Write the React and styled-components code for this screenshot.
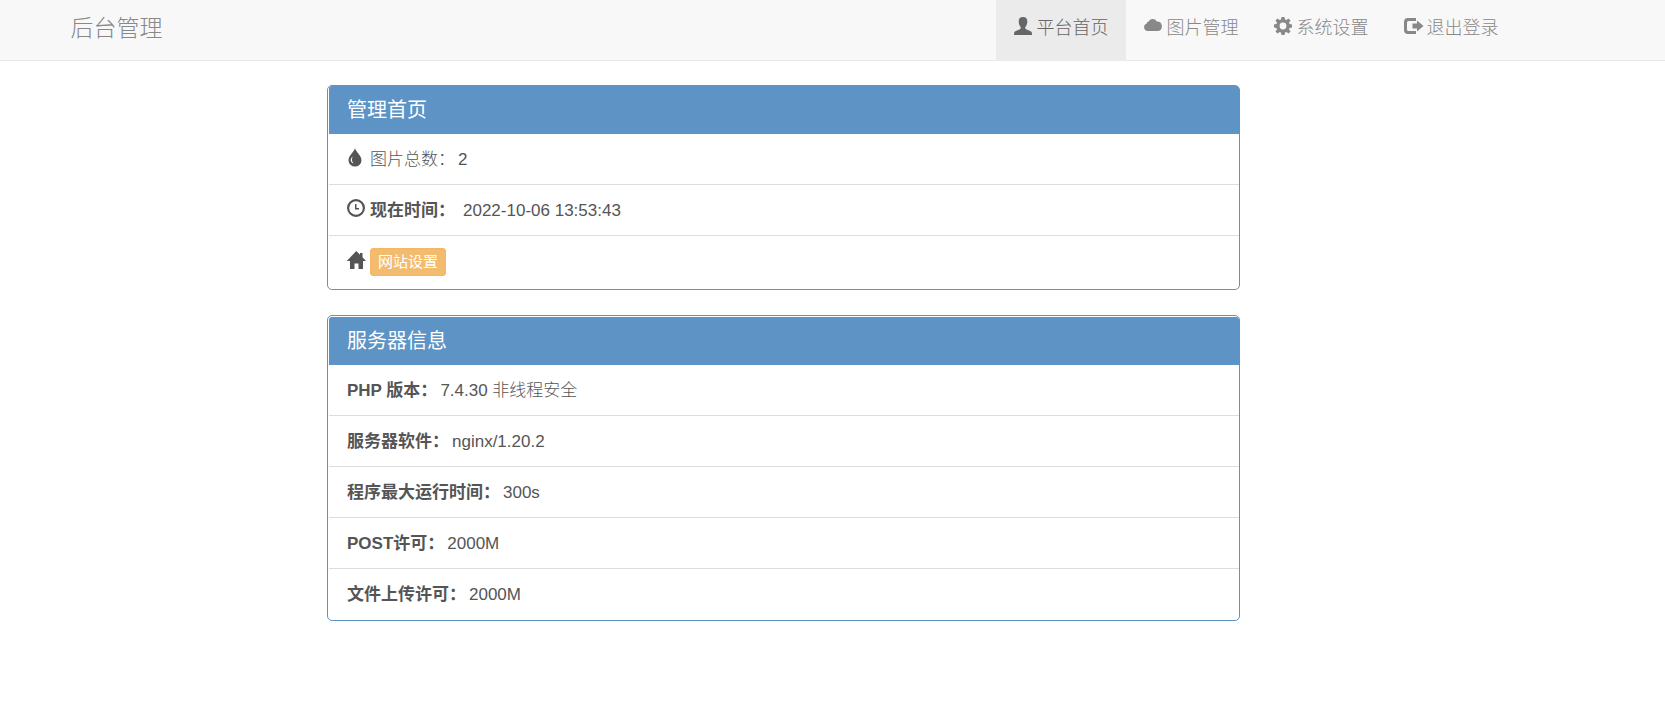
import React from 'react';
import styled, { createGlobalStyle } from 'styled-components';

const icons = {
  user: (
    <path d="M9 0C6.200 0 4.700 1.500 4.700 4.300c0 1.900.5 3.700 1.400 4.900.5.7.7 1.100.7 1.600 0 .9-.5 1.300-1.500 1.700L1.800 14C.6 14.600 0 15.400 0 17v1h18v-1c0-1.600-.6-2.400-1.800-3l-3.500-1.500c-1-.4-1.500-.8-1.500-1.700 0-.5.2-.9.7-1.600.9-1.200 1.400-3 1.400-4.900C13.300 1.500 11.800 0 9 0z" />
  ),
  cloud: (
    <path d="M3.600 14A3.700 3.700 0 0 1 2.600 6.800 2.500 2.500 0 0 1 4.600 4.500 4.700 4.700 0 0 1 12.800 4.500 4.800 4.800 0 0 1 14 14z" />
  ),
  cog: (
    <path
      fillRule="evenodd"
      d="M7.500 0h3l.5 2.500 1.300.6 2.200-1.500 2 2-1.500 2.200.6 1.300 2.400.5v2.800l-2.400.5-.6 1.300 1.500 2.200-2 2-2.200-1.500-1.300.6-.5 2.500h-3L7 15.500l-1.300-.6-2.200 1.500-2-2L3 12.200l-.6-1.300L0 10.400V7.600l2.400-.5L3 5.800 1.500 3.600l2-2 2.200 1.500L7 2.500zM9 5.600a3.400 3.400 0 1 0 0 6.800 3.400 3.400 0 0 0 0-6.800z"
    />
  ),
  logout: (
    <g>
      <path d="M12 1H4a4 4 0 0 0-4 4v8a4 4 0 0 0 4 4h8v-3H4.500a1.500 1.500 0 0 1-1.500-1.500v-7A1.500 1.500 0 0 1 4.500 4H12z" />
      <path d="M13 3.500L19.500 9 13 14.500V11.500H8.500v-5H13z" />
    </g>
  ),
  tint: (
    <path
      fillRule="evenodd"
      d="M8 0C7.400 3.800 1.500 7.300 1.500 12.200a6.500 6.300 0 0 0 13 0C14.500 7.300 8.600 3.800 8 0zM5.700 8.600c-1.100 2.500-1.100 5 .8 6.900C3.300 14.800 2.700 11 5.700 8.600z"
    />
  ),
  time: (
    <path
      fillRule="evenodd"
      d="M9 0a9 9 0 1 0 0 18A9 9 0 0 0 9 0zm0 2.200a6.800 6.800 0 1 1 0 13.600A6.800 6.800 0 0 1 9 2.200zM8 5h1.500v4H12v1.500H8z"
    />
  ),
  home: (
    <path d="M9.300 0L-.3 10H3v8h4.500v-5.500h4V18H16v-8h3L15.500 6.200V2H13v1.700z" />
  ),
};

const Icon = ({ name }) => (
  <IconSvg viewBox="0 0 18 18" aria-hidden="true">
    {icons[name]}
  </IconSvg>
);

const navItems = [
  { icon: 'user', text: '平台首页', active: true },
  { icon: 'cloud', text: '图片管理' },
  { icon: 'cog', text: '系统设置' },
  { icon: 'logout', text: '退出登录' },
];

const serverInfo = [
  { name: 'PHP 版本：', value: '7.4.30 非线程安全' },
  { name: '服务器软件：', value: 'nginx/1.20.2' },
  { name: '程序最大运行时间：', value: '300s' },
  { name: 'POST许可：', value: '2000M' },
  { name: '文件上传许可：', value: '2000M' },
];

const App = () => (
  <>
    <GlobalStyle />
    <Navbar>
      <NavContainer>
        <Brand href="#">后台管理</Brand>
        <NavList>
          {navItems.map(item => (
            <li key={item.text}>
              <NavLink href="#" $active={item.active}>
                <Icon name={item.icon} />
                {item.text}
              </NavLink>
            </li>
          ))}
        </NavList>
      </NavContainer>
    </Navbar>
    <Main>
      <Panel>
        <PanelTitle $flush>管理首页</PanelTitle>
        <List>
          <Row>
            <Icon name="tint" />
            <span>图片总数：</span>
            <Value>2</Value>
          </Row>
          <Row>
            <Icon name="time" />
            <b>现在时间：</b>
            <Clock>2022-10-06 13:53:43</Clock>
          </Row>
          <Row>
            <Icon name="home" />
            <SettingsButton type="button">网站设置</SettingsButton>
          </Row>
        </List>
      </Panel>
      <Panel>
        <PanelTitle>服务器信息</PanelTitle>
        <List>
          {serverInfo.map(info => (
            <Row key={info.name}>
              <b>{info.name}</b>
              <Value>{info.value}</Value>
            </Row>
          ))}
        </List>
      </Panel>
    </Main>
  </>
);

const GlobalStyle = createGlobalStyle`
  * {
    box-sizing: border-box;
  }
  body {
    margin: 0;
    background-color: #fff;
    color: #555;
    font-family: "Liberation Sans", "Noto Sans CJK SC", sans-serif;
    font-size: 17px;
    line-height: 25px;
  }
`;

const IconSvg = styled.svg`
  width: 18px;
  height: 18px;
  margin: 0 5px 4px 0;
  flex: none;
  fill: currentColor;
  overflow: visible;
`;

const Navbar = styled.nav`
  background-color: #f8f8f8;
  border-bottom: 1px solid #e7e7e7;
  padding-right: 98px;
`;

const NavContainer = styled.div`
  display: flex;
  justify-content: space-between;
  max-width: 1464px;
  margin: 0 auto;
  padding-left: 19px;
`;

const Brand = styled.a`
  color: #888;
  font-size: 23px;
  font-weight: 300;
  line-height: 56px;
  text-decoration: none;
`;

const NavList = styled.ul`
  display: flex;
  margin: 0 0 -1px;
  padding: 0;
  list-style: none;
`;

const NavLink = styled.a`
  display: flex;
  align-items: center;
  height: 61px;
  padding: 0 17px 5px 18px;
  font-size: 18px;
  font-weight: 300;
  text-decoration: none;
  color: ${props => (props.$active ? '#666' : '#888')};
  background-color: ${props => (props.$active ? '#ebebeb' : 'transparent')};
`;

const Main = styled.main`
  padding: 24px 98px 0 0;
`;

const Panel = styled.section`
  max-width: 913px;
  margin: 0 auto 25px;
  border: 1px solid #5d93c5;
  border-radius: 5px;
  background-color: #fff;
`;

const PanelTitle = styled.h3`
  margin: ${props => (props.$flush ? '0 0 0 1px' : '1px 0 0 1px')};
  padding: 12px 18px;
  border-radius: 3px 3px 0 0;
  background-color: #5d93c5;
  color: #fff;
  font-size: 20px;
  font-weight: 400;
  line-height: 24px;
`;

const List = styled.ul`
  margin: 0 0 0 1px;
  padding: 0 0 1px;
  list-style: none;
`;

const Row = styled.li`
  display: flex;
  align-items: center;
  min-height: 50px;
  padding: 12px 18px;
  font-weight: 300;
  & + & {
    min-height: 51px;
    border-top: 1px solid #ddd;
  }
  b {
    font-weight: 700;
  }
`;

const Value = styled.span`
  margin-left: 3px;
`;

const Clock = styled.time`
  margin-left: 8px;
`;

const SettingsButton = styled.button`
  height: 28px;
  padding: 0 7px;
  border: 1px solid #f3b765;
  border-radius: 3px;
  background-color: #f3bb6e;
  color: #fff;
  font-family: inherit;
  font-size: 15px;
  line-height: 24px;
`;

export default App;
